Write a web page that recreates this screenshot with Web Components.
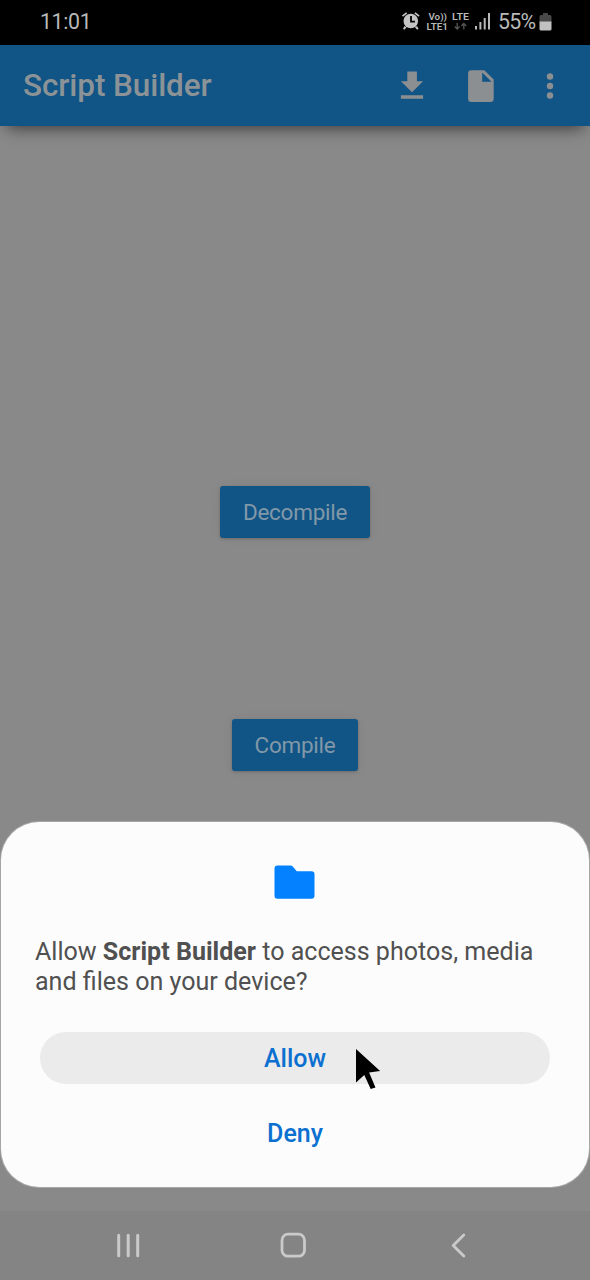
<!DOCTYPE html>
<html lang="en">
<head>
<meta charset="utf-8">
<title>Script Builder</title>
<style>
html,body{margin:0;height:100%}
body{font-family:Roboto,"Liberation Sans",sans-serif;background:#898989;overflow:hidden}
</style>
</head>
<body>
<phone-screen>
  <status-bar slot="status" time="11:01" battery="55%"></status-bar>
  <app-bar slot="bar">Script Builder</app-bar>
  <raised-button>Decompile</raised-button>
  <raised-button>Compile</raised-button>
  <permission-sheet slot="sheet">
    <span>Allow <b>Script Builder</b> to access photos, media<br>and files on your device?</span>
    <sheet-button slot="actions" pressed>Allow</sheet-button>
    <sheet-button slot="actions">Deny</sheet-button>
  </permission-sheet>
  <nav-bar slot="nav"></nav-bar>
  <mouse-pointer slot="pointer"></mouse-pointer>
</phone-screen>
<script>
const define = (name, html, setup) => customElements.define(name, class extends HTMLElement {
  constructor() {
    super();
    this.attachShadow({ mode: 'open' }).innerHTML = html;
  }
  connectedCallback() { if (setup) setup(this, this.shadowRoot); }
});

define('phone-screen', `
<style>
:host{display:flex;flex-direction:column;width:590px;height:1280px;position:relative;background:#898989;overflow:hidden}
main{flex:1;display:flex;flex-direction:column;align-items:center;gap:181px;padding-top:360px;box-sizing:border-box;min-height:0}
footer{padding:0 1px 24px}
</style>
<slot name="status"></slot><slot name="bar"></slot>
<main><slot></slot></main>
<footer><slot name="sheet"></slot></footer>
<slot name="nav"></slot><slot name="pointer"></slot>`);

define('status-bar', `
<style>
:host{display:flex;justify-content:space-between;align-items:center;height:45px;box-sizing:border-box;padding:0 38px 2px 40px;background:#000;color:#b9b9b9;font-size:21.3px}
.time{letter-spacing:-.35px}
.right{display:flex;align-items:center}
.pct{width:41px;margin-left:6px;letter-spacing:-.7px;white-space:nowrap}
svg{display:block}
</style>
<span class="time"></span>
<div class="right">
<svg width="92" height="24" viewBox="400 10 92 24">
  <g fill="#c4c4c4"><circle cx="410.800" cy="21" r="7.300"/>
  <path d="M404.500 26l2 1.500-2.200 2.200-1.300-1zM417 26l-2 1.500 2.200 2.200 1.300-1z"/></g>
  <path d="M402.500 16.200l4.200-3.300M419.100 16.200l-4.200-3.300" stroke="#c4c4c4" stroke-width="1.700"/>
  <path d="M411 16v5.700h4" fill="none" stroke="#000" stroke-width="1.800"/>
  <g fill="#b9b9b9" font-family="Roboto" font-weight="600" font-size="9.600">
    <text x="428.500" y="19.500" textLength="18.500" lengthAdjust="spacingAndGlyphs">Vo))</text>
    <text x="426.500" y="29.500" textLength="21.500" lengthAdjust="spacingAndGlyphs">LTE1</text>
    <text x="452" y="19.800" textLength="17" lengthAdjust="spacingAndGlyphs">LTE</text>
  </g>
  <path d="M457.200 23v6M454.800 26.500l2.400 2.500 2.400-2.500M463.800 29.500v-6M461.400 26l2.400-2.500 2.400 2.500" fill="none" stroke="#555" stroke-width="1.300"/>
  <path d="M476 26v3.500M480.400 22v7.500M484.700 18v11.500M489 13v16.500" stroke="#b9b9b9" stroke-width="2"/>
</svg>
<span class="pct"></span>
<svg width="13" height="20" viewBox="0 0 13 20"><path d="M4 1h5v2h2q1.500 0 1.500 1.500V10H.5V4.500Q.5 3 2 3h2z" fill="#484848"/><path d="M.5 9.500h12V17q0 1.500-1.500 1.500H2Q.5 18.500.5 17z" fill="#c1c1c1"/></svg>
</div>`, (el, root) => {
  root.querySelector('.time').textContent = el.getAttribute('time');
  root.querySelector('.pct').textContent = el.getAttribute('battery');
});

define('app-bar', `
<style>
:host{display:flex;align-items:center;height:81px;box-sizing:border-box;padding:0 23px;background:#115486;color:#8c9397;box-shadow:0 9px 15px -7px rgba(0,0,0,.6);position:relative}
h1{flex:1;margin:0;font-size:31.5px;font-weight:500;letter-spacing:-.1px;line-height:36px}
svg{display:block}
</style>
<h1><slot></slot></h1>
<svg width="170" height="40" viewBox="397 66 170 40" fill="#8c8f91">
  <path d="M407.300 71.600h9.600v9.600h6.200L412 92.200 400.900 81.200h6.400zM400.900 95.300h22.200v3.500h-22.200z"/>
  <path fill-rule="evenodd" d="M471.300 70.200h13l9.400 9.400v19.200q0 3.200-3.200 3.200h-19.200q-3.200 0-3.200-3.200V73.400q0-3.200 3.200-3.200zM482.200 72.500v9.300h9.300z"/>
  <circle cx="550" cy="76.500" r="3.200"/><circle cx="550" cy="86" r="3.200"/><circle cx="550" cy="95.500" r="3.200"/>
</svg>`);

define('raised-button', `
<style>
:host{display:block;height:52px;box-sizing:border-box;padding:0 23px;background:#115486;color:#8198a8;border-radius:3px;font-size:22.500px;letter-spacing:-.27px;line-height:52px;box-shadow:0 1px 3px rgba(0,0,0,.2),0 0 14px rgba(0,0,0,.04)}
</style><slot></slot>`);

define('permission-sheet', `
<style>
:host{display:flex;flex-direction:column;height:365px;box-sizing:border-box;padding:43px 39px 0;background:#fcfcfc;border-radius:38px;box-shadow:0 0 0 1px rgba(255,255,255,.25)}
.icon{display:block;align-self:center;width:41px;height:34px;margin-right:1px}
p{margin:38px -5px 0;color:#505050;font-size:25.050px;line-height:29.500px;white-space:nowrap}
.actions{display:flex;flex-direction:column;gap:23px;margin-top:36px}
</style>
<svg class="icon" viewBox="0 0 41 34"><path d="M3.500.5h13.200q1 0 1.800.8l4.300 4.900h14.700q3 0 3 3v21.500q0 3-3 3h-34q-3 0-3-3V3.500q0-3 3-3z" fill="#0381fe"/></svg>
<p><slot></slot></p>
<div class="actions"><slot name="actions"></slot></div>`);

define('sheet-button', `
<style>
:host{display:block;height:52px;border-radius:26px;text-align:center;color:#0b70d0;font-size:25px;font-weight:500;line-height:53px}
:host([pressed]){background:#ebebeb}
</style><slot></slot>`);

define('nav-bar', `
<style>
:host{display:flex;justify-content:center;align-items:center;height:69px;background:#848484}
svg{display:block}
</style>
<svg width="590" height="69" viewBox="0 1211 590 69" fill="none" stroke="#cacaca" stroke-linecap="round">
  <path d="M118.700 1235.200v20.500M128.200 1235.200v20.500M137.700 1235.200v20.500" stroke-width="3"/>
  <rect x="282" y="1234.200" width="22.500" height="22" rx="6" stroke-width="2.800"/>
  <path d="M463.800 1235l-10.600 10.500 10.600 10.500" stroke-width="2.800" stroke-linejoin="round"/>
</svg>`);

define('mouse-pointer', `
<style>:host{display:block;position:absolute;left:355px;top:1048px;width:26px;height:42px}svg{display:block}</style>
<svg width="26" height="42" viewBox="355 1048 26 42"><path d="M356 1049v33.500l8.300-7.400 6.400 14 4.800-1.700-6.400-14.900 11-1.600z" fill="#000"/></svg>`);
</script>
</body>
</html>
